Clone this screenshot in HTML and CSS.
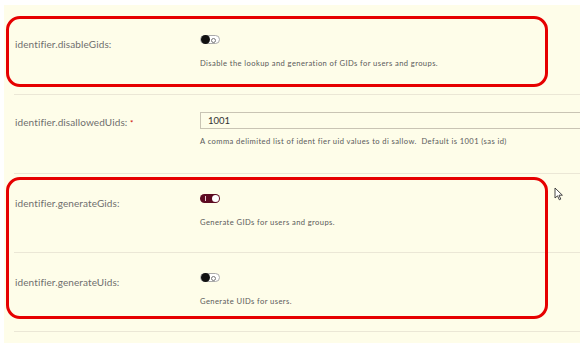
FILE: index.html
```html
<!DOCTYPE html>
<html lang="en">
<head>
    <meta charset="UTF-8">
    <title>Identifier settings</title>
    <link rel="stylesheet" href="styles.css">
</head>
<body>
    <div class="page">
        <!-- SETTINGS LIST -->
        <div class="settings">
            <div class="row first">
                <div class="label">identifier.disableGids:</div>
                <div class="value">
                    <span class="toggle off"><span class="knob"></span><span class="ring"></span></span>
                    <div class="desc">Disable the lookup and generation of GIDs for users and groups.</div>
                </div>
            </div>

            <div class="row">
                <div class="label input-label">identifier.disallowedUids: <span class="req">*</span></div>
                <div class="value">
                    <div class="text-input">1001</div>
                    <div class="desc">A comma delimited list of ident fier uid values to di sallow.&nbsp; Default is 1001 (sas id)</div>
                </div>
            </div>

            <div class="row">
                <div class="label">identifier.generateGids:</div>
                <div class="value">
                    <span class="toggle on"><span class="bar"></span><span class="knob"></span></span>
                    <div class="desc">Generate GIDs for users and groups.</div>
                </div>
            </div>

            <div class="row">
                <div class="label">identifier.generateUids:</div>
                <div class="value">
                    <span class="toggle off"><span class="knob"></span><span class="ring"></span></span>
                    <div class="desc">Generate UIDs for users.</div>
                </div>
            </div>
        </div>

        <!-- ANNOTATIONS -->
        <div class="mark mark-one"></div>
        <div class="mark mark-two"></div>

        <svg class="cursor" width="10" height="14" viewBox="0 0 10 14">
            <path d="M1 1 L1 11 L3.5 8.8 L5.3 12.8 L6.8 12.1 L5 8.2 L8.4 8.2 Z" fill="#fff" stroke="#333" stroke-width="0.9" stroke-linejoin="round"/>
        </svg>
    </div>
</body>
</html>
```

FILE: styles.css
```css
:root {
    --cream: #fefde9;
    --line: #ebe7d6;
    --label-color: #6e6e6e;
    --desc-color: #5a5a5a;
    --mark-red: #e60000;
}

body {
    margin: 0;
    background: #fff;
    font-family: 'Lato', 'Open Sans', sans-serif;
    height: 343px;
    overflow: hidden;
}

.page {
    position: relative;
    margin: 5px 0 0 4px;
    height: 338px;
    background: var(--cream);
    padding-top: 10px;
    box-sizing: border-box;
}

/* SETTINGS ROWS */
.settings {
    margin-left: 10px;
}

.row {
    display: grid;
    grid-template-columns: 186px 1fr;
    height: 79px;
    box-sizing: border-box;
    border-bottom: 1px solid var(--line);
}

.row.first {
    height: 80px;
}

.label {
    padding: 23px 0 0 1px;
    font-size: 10px;
    color: var(--label-color);
    letter-spacing: 0.1px;
}

.label.input-label {
    padding-top: 21px;
}

.req {
    color: #c00;
    font-size: 8px;
}

.value {
    padding-top: 20px;
}

.desc {
    margin-top: 14px;
    font-size: 7.6px;
    color: var(--desc-color);
    letter-spacing: 0.4px;
}

.text-input {
    height: 15px;
    border: 1px solid #c9c4b4;
    border-right: none;
    background: var(--cream);
    font-size: 9.5px;
    color: #333;
    padding-left: 7px;
    line-height: 15px;
    margin-top: -3px;
}

.text-input + .desc {
    margin-top: 7px;
}

/* TOGGLES */
.toggle {
    position: relative;
    display: block;
    width: 20px;
    height: 9px;
    border-radius: 5px;
    box-sizing: border-box;
}

.toggle.off {
    border: 1px solid #aaa;
    background: #fff;
}

.toggle.off .knob {
    position: absolute;
    left: 0;
    top: -1px;
    width: 9px;
    height: 9px;
    border-radius: 50%;
    background: #111;
}

.toggle.off .ring {
    position: absolute;
    right: 3px;
    top: 1.5px;
    width: 3px;
    height: 3px;
    border-radius: 50%;
    border: 1px solid #777;
}

.toggle.on {
    background: #5d0b22;
}

.toggle.on .bar {
    position: absolute;
    left: 5px;
    top: 2px;
    width: 1px;
    height: 5px;
    background: #e9c9d0;
}

.toggle.on .knob {
    position: absolute;
    right: 1px;
    top: 1px;
    width: 7px;
    height: 7px;
    border-radius: 50%;
    background: #fff;
}

/* RED CALLOUTS */
.mark {
    position: absolute;
    border: 3px solid var(--mark-red);
    border-radius: 14px;
    box-sizing: border-box;
    left: 2px;
    width: 542px;
}

.mark-one {
    top: 11px;
    height: 71px;
}

.mark-two {
    top: 172px;
    height: 142px;
}

.cursor {
    position: absolute;
    left: 550px;
    top: 182px;
}
```
